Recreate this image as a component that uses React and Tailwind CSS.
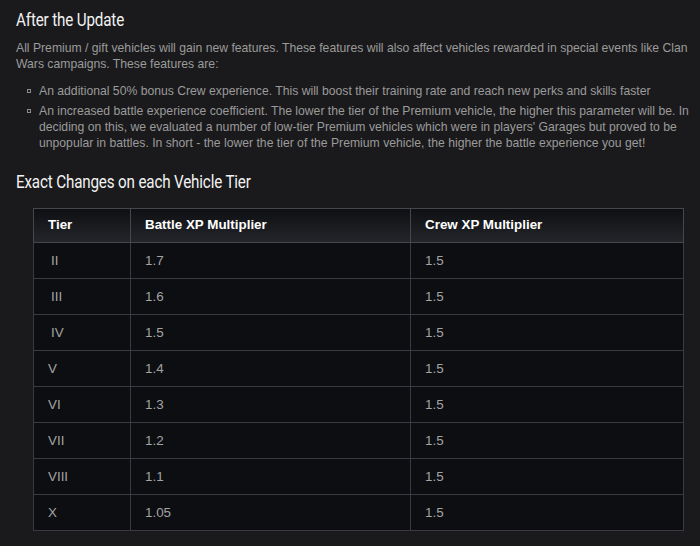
const rows = [
  { tier: "II", indent: true, battle: "1.7", crew: "1.5" },
  { tier: "III", indent: true, battle: "1.6", crew: "1.5" },
  { tier: "IV", indent: true, battle: "1.5", crew: "1.5" },
  { tier: "V", battle: "1.4", crew: "1.5" },
  { tier: "VI", battle: "1.3", crew: "1.5" },
  { tier: "VII", battle: "1.2", crew: "1.5" },
  { tier: "VIII", battle: "1.1", crew: "1.5" },
  { tier: "X", battle: "1.05", crew: "1.5" },
];

function Heading({ children, className = "" }) {
  return (
    <h2 className={`h-6 whitespace-nowrap text-[19px] leading-6 text-[#f2f2f2] ${className}`}>
      <span className="inline-block origin-left scale-x-[0.8] font-['Roboto',sans-serif] tracking-[-0.2px]">
        {children}
      </span>
    </h2>
  );
}

export default function App() {
  return (
    <div className="min-h-[546px] w-[700px] bg-[#1a1a1c] pl-4 pt-[8px] pb-4 font-['Liberation_Sans',Arial,sans-serif]">
      <Heading>After the Update</Heading>
      <p className="mt-[8px] text-[12.2px] leading-4 text-[#9b9b9b]">
        All Premium / gift vehicles will gain new features. These features will also affect vehicles rewarded in special events like Clan Wars campaigns. These features are:
      </p>
      <ul className="mt-[11px] space-y-1 pl-[23px] pr-1 text-[12.2px] leading-4 text-[#9b9b9b]">
        <li className="relative">
          <span className="absolute left-[-12px] top-[6px] h-1 w-1 border border-[#8a8a8a]" />
          An additional 50% bonus Crew experience. This will boost their training rate and reach new perks and skills faster
        </li>
        <li className="relative">
          <span className="absolute left-[-12px] top-[6px] h-1 w-1 border border-[#8a8a8a]" />
          An increased battle experience coefficient. The lower the tier of the Premium vehicle, the higher this parameter will be. In deciding on this, we evaluated a number of low-tier Premium vehicles which were in players' Garages but proved to be unpopular in battles. In short - the lower the tier of the Premium vehicle, the higher the battle experience you get!
        </li>
      </ul>
      <Heading className="mt-[19px]">Exact Changes on each Vehicle Tier</Heading>
      <div className="mt-[14px] ml-[17px] w-[651px]">
        <table className="w-full border-collapse text-[13.4px]">
          <thead>
            <tr className="h-[34px] bg-gradient-to-b from-[#0f1013] to-[#25262b] text-left">
              <th className="w-[97px] border border-[#45474d] pl-[14px] font-bold text-white">Tier</th>
              <th className="w-[280px] border border-[#45474d] pl-[14px] font-bold text-white">Battle XP Multiplier</th>
              <th className="border border-[#45474d] pl-[14px] font-bold text-white">Crew XP Multiplier</th>
            </tr>
          </thead>
          <tbody>
            {rows.map((r) => (
              <tr key={r.tier} className="h-9 bg-[#0d0e11] text-[#a3a3a3]">
                <td className={`border border-[#3a3b40] pt-[2px] ${r.indent ? "pl-[17px]" : "pl-[14px]"}`}>{r.tier}</td>
                <td className="border border-[#3a3b40] pt-[2px] pl-[14px]">{r.battle}</td>
                <td className="border border-[#3a3b40] pt-[2px] pl-[14px]">{r.crew}</td>
              </tr>
            ))}
          </tbody>
        </table>
      </div>
    </div>
  );
}
